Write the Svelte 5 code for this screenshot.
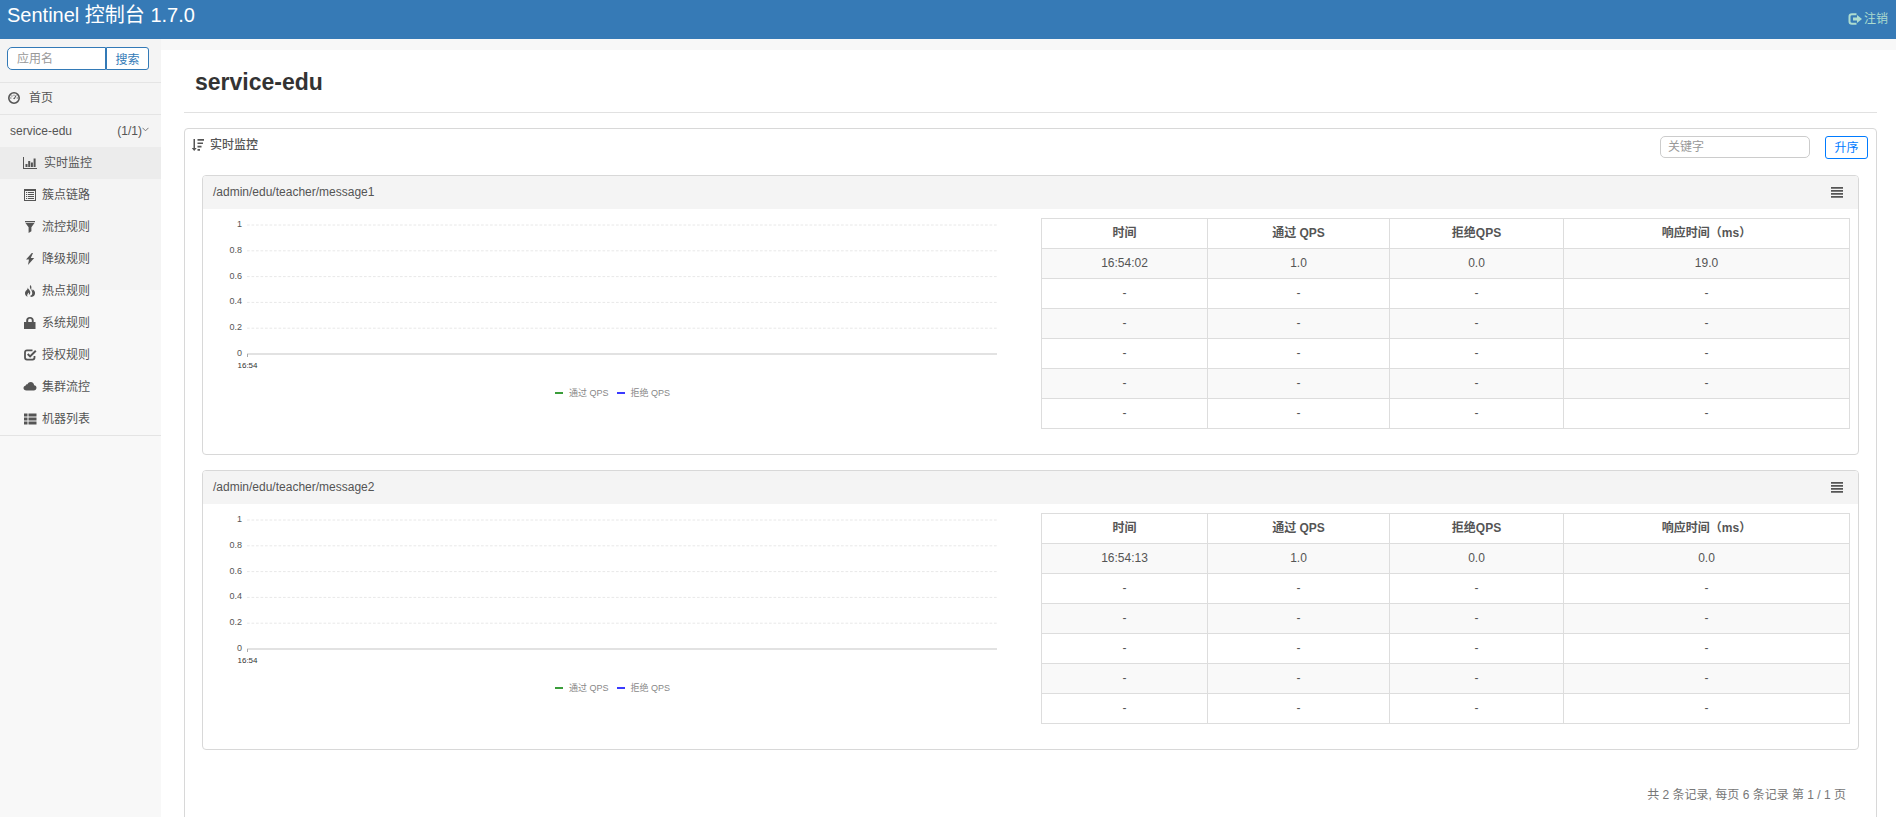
<script>
  const menu = [
    { icon: 'bars', text: '实时监控', active: true },
    { icon: 'listalt', text: '簇点链路' },
    { icon: 'filter', text: '流控规则' },
    { icon: 'flash', text: '降级规则' },
    { icon: 'fire', text: '热点规则' },
    { icon: 'lock', text: '系统规则' },
    { icon: 'check', text: '授权规则' },
    { icon: 'cloud', text: '集群流控' },
    { icon: 'thlist', text: '机器列表' }
  ];

  const blank = ['-', '-', '-', '-'];
  const resources = [
    { name: '/admin/edu/teacher/message1', rows: [['16:54:02', '1.0', '0.0', '19.0'], blank, blank, blank, blank, blank] },
    { name: '/admin/edu/teacher/message2', rows: [['16:54:13', '1.0', '0.0', '0.0'], blank, blank, blank, blank, blank] }
  ];

  const ticks = ['1', '0.8', '0.6', '0.4', '0.2', '0'];
  let app = $state('');
  let keyword = $state('');
</script>

{#snippet icon(name)}
  <svg class="icon" viewBox="0 0 14 12" aria-hidden="true">
    {#if name === 'bars'}
      <path d="M0 0h1v11h13v1H0zM2.500 7h2v3h-2zM5.200 4h2v6h-2zM7.900 5.500h2V10h-2zM10.600 1.500h2V10h-2z" />
    {:else if name === 'listalt'}
      <path fill-rule="evenodd" d="M1 0h12v12H1zM2 2v9h10V2z" />
      <path d="M3 3h1.200v1H3zM5 3h6v1H5zM3 5h1.200v1H3zM5 5h6v1H5zM3 7h1.200v1H3zM5 7h6v1H5zM3 9h1.200v1H3zM5 9h6v1H5z" />
    {:else if name === 'filter'}
      <path d="M2 0h10v1.200H2zM2.500 2h9L8.400 6.300V10.300L5.600 12V6.300z" />
    {:else if name === 'flash'}
      <path d="M8.800 0L3 6.500h3L5 12l6.200-7H7.800L10 0z" />
    {:else if name === 'fire'}
      <path d="M4.700 2.500C5 5 2 5.400 2 8.200c0 1.900 1.200 3 2.600 3.500C3.500 9.800 4.800 8.800 5.600 7.400c.5 1 .5 1.700 0 2.700 1.400-.7 2-2 1.600-3.600C6.800 4.800 5.300 4.500 4.700 2.500zM7.300 0c2.200 2 .2 3.500 1.500 5.200.4.500.9.200.8-1C11.500 5.500 12.300 7 12 8.700c-.3 1.800-1.600 2.900-3.300 3.300-.8-.2-1.500-.4-2-.9 2.300-.7 3-2.500 2.300-4.400C8.400 4.800 5.900 3 7.300 0z" />
    {:else if name === 'lock'}
      <path fill-rule="evenodd" d="M1 5h2.200V3.300C3.200 1.300 4.600 0 6.800 0h.4c2.100 0 3.500 1.300 3.500 3.300V5H12.500v7H1zM5.200 5h3.600V3.400c0-1-.6-1.600-1.600-1.600h-.4c-1 0-1.600.6-1.600 1.600z" />
    {:else if name === 'check'}
      <path fill="none" stroke="currentColor" stroke-width="1.800" d="M9.500 1.400H4C2.700 1.400 2 2.100 2 3.400v5.200c0 1.300.7 2 2 2h5.500c1.300 0 2-.7 2-2V7" />
      <path fill="none" stroke="currentColor" stroke-width="2" d="M4.700 5l2.400 2.400L12.800 1.700" />
    {:else if name === 'cloud'}
      <path d="M3.500 9.500C1.600 9.500.5 8.400.5 7.100c0-1.200.8-2.100 2-2.300C2.700 3.400 3.700 3 4.500 3.200 5.100 1.700 6.400 1 7.700 1c2 0 3.300 1.300 3.400 3.200 1.400.1 2.400 1.200 2.400 2.600 0 1.600-1.200 2.700-2.700 2.700z" />
    {:else if name === 'thlist'}
      <path d="M1 0.500h3.500v3H1zM5.500 .5h8v3h-8zM1 4.500h3.500v3H1zM5.500 4.500h8v3h-8zM1 8.500h3.500v3H1zM5.500 8.500h8v3h-8z" />
    {:else if name === 'dashboard'}
      <circle cx="7" cy="6" r="5.200" fill="none" stroke="currentColor" stroke-width="1.600" />
      <path d="M3.200 5.500h1.200v1H3.200zM4.400 3.500h1.100v1H4.400zM6.500 2.700h1v1h-1zM9.700 5.500h1.200v1H9.700zM8.900 3l.7.600-1.700 3.200c-.2.500-1.500.5-1.600-.2 0-.5.5-.8.900-.9z" />
    {:else if name === 'sort'}
      <path d="M2.500 0h1.500v9h1.700L3.200 12 .8 9h1.700zM6.500 0H13v1.700H6.500zM6.500 3.400H12v1.700H6.500zM6.500 6.700h4v1.700h-4zM6.500 10H9v1.700H6.500z" />
    {:else if name === 'logout'}
      <path fill="none" stroke="currentColor" stroke-width="2" d="M8.500 1.200H4C2.300 1.200 1.500 2 1.500 3.500v5c0 1.500.8 2.300 2.500 2.300h4.500" />
      <path d="M5 4.500h4V2l5 4-5 4V7.500H5z" />
    {:else if name === 'justify'}
      <path d="M1 1h12v1.700H1zM1 4h12v1.700H1zM1 7h12v1.700H1zM1 10h12v1.700H1z" />
    {/if}
  </svg>
{/snippet}

<header>
  <a class="brand" href="#/">Sentinel 控制台 1.7.0</a>
  <button class="logout">{@render icon('logout')}注销</button>
</header>

<div class="layout">
  <aside>
    <nav>
      <form class="search">
        <input type="text" aria-label="应用名" placeholder="应用名" bind:value={app} />
        <button type="button">搜索</button>
      </form>
      <a class="row home" href="#/home">{@render icon('dashboard')}首页</a>
      <a class="row service" href="#/service">
        <span>service-edu</span>
        <span class="count">(1/1)<svg class="arrow" viewBox="0 0 7 5" aria-hidden="true"><path d="M.5 .8l3 3 3-3" /></svg></span>
      </a>
      <ul>
        {#each menu as item}
          <li><a class="row item" class:active={item.active} href="#/{item.icon}">{@render icon(item.icon)}{item.text}</a></li>
        {/each}
      </ul>
    </nav>
  </aside>

  <main>
    <h1>service-edu</h1>
    <section class="card">
      <div class="toolbar">
        <h2>{@render icon('sort')}实时监控</h2>
        <input type="text" aria-label="关键字" placeholder="关键字" bind:value={keyword} />
        <button type="button">升序</button>
      </div>

      {#each resources as resource}
        <article>
          <div class="head">
            <span>{resource.name}</span>
            <button type="button" aria-label="列表">{@render icon('justify')}</button>
          </div>
          <div class="body">
            <div class="chart">
              <div class="plot">
                <div class="yaxis">
                  {#each ticks as tick}<span>{tick}</span>{/each}
                </div>
                <svg class="grid" aria-hidden="true">
                  {#each ticks.slice(0, 5) as _, i}
                    <line class="guide" x1="0" x2="100%" y1="{i * 20}%" y2="{i * 20}%" />
                  {/each}
                  <line class="axis" x1="0" x2="100%" y1="100%" y2="100%" />
                  <line class="mark" x1="0.5" x2="0.5" y1="129" y2="132" />
                </svg>
              </div>
              <div class="xaxis">16:54</div>
              <div class="legend">
                <span><i class="pass"></i>通过 QPS</span>
                <span><i class="block"></i>拒绝 QPS</span>
              </div>
            </div>
            <table>
              <thead>
                <tr><th>时间</th><th>通过 QPS</th><th>拒绝QPS</th><th>响应时间（ms）</th></tr>
              </thead>
              <tbody>
                {#each resource.rows as row}
                  <tr>{#each row as cell}<td>{cell}</td>{/each}</tr>
                {/each}
              </tbody>
            </table>
          </div>
        </article>
      {/each}

      <p class="pager">共 2 条记录, 每页 6 条记录 第 1 / 1 页</p>
    </section>
  </main>
</div>

<style>
  :global(body) {
    background: #f8f8f8;
    color: #555;
    font: 12px/18px "Liberation Sans", "Noto Sans CJK SC", sans-serif;
    overflow: hidden;
  }
  :global(#app) {
    height: 100vh;
    display: flex;
    flex-direction: column;
  }
  * { box-sizing: border-box; }
  a { color: inherit; text-decoration: none; }
  button, input { font: inherit; margin: 0; }
  button { cursor: pointer; }
  .icon { width: 14px; height: 12px; fill: currentColor; flex: none; }

  header {
    flex: none;
    height: 39px;
    background: #367ab6;
    display: flex;
    justify-content: space-between;
    align-items: flex-start;
    padding: 0 8px 0 7px;
  }
  .brand { color: #fff; font-size: 20px; line-height: 30px; }
  .logout {
    display: flex;
    align-items: center;
    gap: 2px;
    padding: 10px 0 0;
    border: 0;
    background: none;
    color: #addccf;
  }

  .layout { flex: 1; min-height: 0; display: flex; }
  aside { flex: none; width: 161px; background: linear-gradient(#f4f4f4 251px, #f8f8f8 251px); }
  .search {
    display: flex;
    height: 44px;
    padding: 8px 12px 12px 7px;
    border-bottom: 1px solid #e4e4e4;
  }
  .search input {
    width: 99px;
    min-width: 0;
    padding: 0 9px;
    border: 1px solid #337ab7;
    border-radius: 5px 0 0 5px;
    background: #fff;
  }
  .search button {
    flex: 1;
    padding: 2px 0 0;
    border: 1px solid #337ab7;
    border-radius: 0 3px 3px 0;
    background: #fff;
    color: #337ab7;
  }
  input::placeholder { color: #999; opacity: 1; }
  .row { display: flex; align-items: center; height: 32px; }
  .home { gap: 8px; padding: 0 0 2px 7px; border-bottom: 1px solid #e4e4e4; }
  .service { justify-content: space-between; padding: 0 12px 0 10px; }
  .count { display: flex; align-items: flex-start; }
  .arrow { width: 7px; height: 5px; margin-top: 5px; fill: none; stroke: #777; }
  ul { list-style: none; margin: 0; padding: 0; border-bottom: 1px solid #e4e4e4; }
  .item { gap: 5px; padding-left: 23px; }
  .active { gap: 7px; background: #ececec; }

  main {
    flex: 1;
    min-width: 0;
    margin-top: 11px;
    padding: 0 19px 0 23px;
    background: #fff;
    overflow: hidden;
  }
  h1 {
    margin: 0 0 15px;
    padding: 17px 11px 15px;
    border-bottom: 1px solid #e1e1e1;
    color: #333;
    font-size: 23px;
    line-height: 30px;
  }
  .card { border: 1px solid #d8d8d8; border-radius: 4px; padding: 0 17px; min-height: 100vh; }
  .toolbar { display: flex; align-items: center; gap: 15px; height: 46px; margin: 0 -9px 0 -11px; padding-bottom: 10px; }
  h2 { flex: 1; display: flex; align-items: center; gap: 5px; margin: 0; padding-bottom: 4px; font-size: 12px; font-weight: 500; }
  .toolbar input {
    width: 150px;
    height: 22px;
    padding: 0 7px;
    border: 1px solid #ccc;
    border-radius: 5px;
  }
  .toolbar button {
    width: 43px;
    height: 23px;
    padding: 2px 0 0;
    border: 1px solid #007bff;
    border-radius: 3px;
    background: #fff;
    color: #007bff;
  }

  article { margin-bottom: 15px; border: 1px solid #d8d8d8; border-radius: 4px; }
  .head {
    display: flex;
    justify-content: space-between;
    align-items: center;
    height: 33px;
    padding: 0 14px 2px 10px;
    border-radius: 3px 3px 0 0;
    background: #f4f4f4;
  }
  .head button { display: flex; padding: 0; border: 0; background: none; color: #555; }
  .body { display: grid; grid-template-columns: 838fr 809fr; padding: 9px 8px 25px 0; }
  .chart { padding: 7px 44px 0 14px; }
  .plot { display: flex; gap: 5px; height: 129px; }
  .yaxis {
    display: flex;
    flex-direction: column;
    justify-content: space-between;
    width: 25px;
    margin: -6px 0 -4px;
    text-align: right;
    font-size: 9px;
    line-height: 10px;
  }
  .grid { flex: 1; min-width: 0; height: 129px; overflow: visible; }
  .guide { stroke: #e8e8e8; stroke-dasharray: 2.7 1.8; }
  .axis { stroke: #e2e2e2; stroke-width: 2; }
  .mark { stroke: #aaa; }
  .xaxis { width: 61px; padding-top: 7px; text-align: center; font-size: 8px; line-height: 10px; color: #333; }
  .legend { display: flex; justify-content: center; gap: 8px; margin-top: 17px; padding-left: 11px; font-size: 9px; line-height: 10px; color: #888; }
  .legend span { display: flex; align-items: center; gap: 6px; }
  .legend i { width: 8px; height: 2px; }
  .pass { background: #3a9d3a; }
  .block { background: #3a3aff; }

  table { width: 100%; border-collapse: collapse; table-layout: fixed; }
  th, td { height: 30px; padding: 0 0 2px; border: 1px solid #ddd; text-align: center; }
  th:nth-child(1) { width: 166px; }
  th:nth-child(2) { width: 182px; }
  th:nth-child(3) { width: 174px; }
  tbody tr:nth-child(odd) { background: #f9f9f9; }
  .pager { margin: 36px 13px 0; text-align: right; color: #777; }
</style>
